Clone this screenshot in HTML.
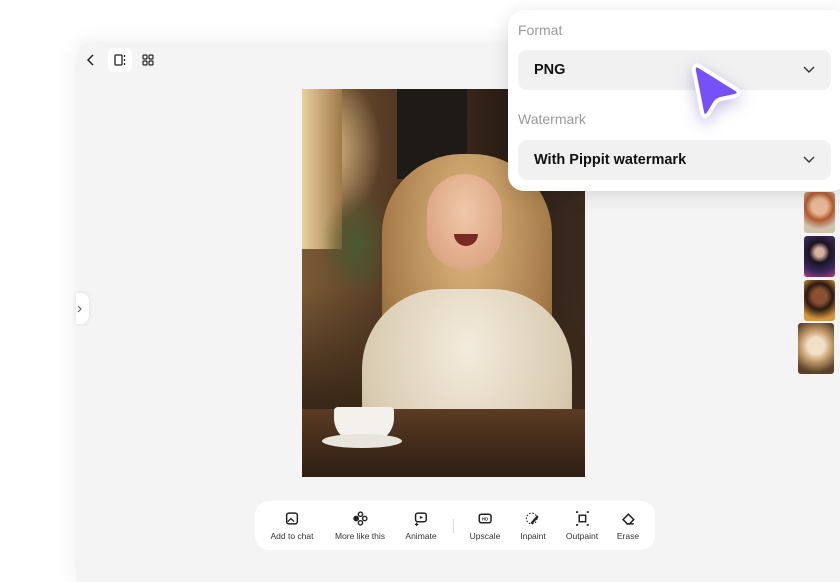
<!DOCTYPE html>
<html><head><meta charset="utf-8"><style>
*{margin:0;padding:0;box-sizing:border-box}
body{width:840px;height:560px;overflow:hidden;background:#fff;font-family:"Liberation Sans",sans-serif;position:relative}
.main{position:absolute;left:76px;top:42px;width:800px;height:540px;background:#f4f4f4;border-radius:18px 0 0 0;box-shadow:0 0 24px rgba(0,0,0,.08)}
.photo{position:absolute;left:302px;top:89px;width:283px;height:388px;overflow:hidden;
background:radial-gradient(ellipse 60px 80px at 20px 60px,#e8c890,transparent),linear-gradient(90deg,#7b5a35 0%,#4a3220 40%,#2a1e16 70%,#3b2a1e 100%)}
.abs{position:absolute}
.tb{position:absolute;left:255px;top:501px;width:400px;height:49px;background:#fff;border-radius:14px}
.tb .it{position:absolute;top:10px;text-align:center;font-size:8.5px;color:#333;transform:translateX(-50%);white-space:nowrap}
.tb svg{display:block;margin:0 auto 5px}
.panel{position:absolute;left:508px;top:10px;width:340px;height:181px;background:#fff;border-radius:16px;box-shadow:0 4px 20px rgba(0,0,0,.12)}
.lbl{position:absolute;left:10px;font-size:14px;color:#999}
.sel{position:absolute;left:10px;width:313px;height:40px;background:#f1f1f1;border-radius:9px;font-size:14.5px;font-weight:bold;color:#111;padding:12px 0 0 16px}
.sel svg{position:absolute;right:16px;top:16px}
.th{position:absolute;border-radius:3px;overflow:hidden}
</style></head><body>
<div class="main"></div>
<svg class="abs" style="left:85px;top:53px" width="12" height="14" viewBox="0 0 12 14"><path d="M8 2L3 7l5 5" stroke="#222" stroke-width="1.5" fill="none"/></svg>
<div class="abs" style="left:108px;top:48px;width:24px;height:24px;background:#fff;border-radius:6px"></div>
<svg class="abs" style="left:113px;top:53px" width="14" height="14" viewBox="0 0 14 14"><rect x="2" y="2" width="7" height="10" rx="1" stroke="#222" stroke-width="1.3" fill="none"/><path d="M11.5 2v2M11.5 6v2M11.5 10v2" stroke="#222" stroke-width="1.3"/></svg>
<svg class="abs" style="left:141px;top:53px" width="14" height="14" viewBox="0 0 14 14"><g stroke="#222" stroke-width="1.2" fill="none"><rect x="2" y="2" width="4" height="4" rx="1"/><rect x="8" y="2" width="4" height="4" rx="1"/><rect x="2" y="8" width="4" height="4" rx="1"/><rect x="8" y="8" width="4" height="4" rx="1"/></g></svg>
<div class="abs" style="left:76px;top:293px;width:13px;height:31px;background:#fff;border-radius:0 8px 8px 0;box-shadow:0 0 4px rgba(0,0,0,.1)"></div>
<svg class="abs" style="left:77px;top:305px" width="6" height="8" viewBox="0 0 6 8"><path d="M1 1l3 3-3 3" stroke="#555" fill="none"/></svg>

<div class="photo">
 <div class="abs" style="left:95px;top:0;width:70px;height:90px;background:#1e1a16"></div>
 <div class="abs" style="left:0;top:0;width:40px;height:160px;background:linear-gradient(90deg,#e9cfa0,#a07848)"></div>
 <div class="abs" style="left:20px;top:100px;width:70px;height:110px;background:radial-gradient(ellipse,#4a5a30,transparent 70%)"></div>
 <div class="abs" style="left:0;top:200px;width:283px;height:188px;background:linear-gradient(180deg,transparent,#3a2818 60%)"></div>
 <div class="abs" style="left:80px;top:65px;width:170px;height:260px;border-radius:80px 80px 50px 50px;background:radial-gradient(ellipse at 50% 30%,#e0b880,#a57a48 70%,#6a4a2a)"></div>
 <div class="abs" style="left:125px;top:85px;width:75px;height:95px;border-radius:40px 40px 38px 38px;background:radial-gradient(ellipse at 50% 40%,#f0c8a8,#d59a78)"></div>
 <div class="abs" style="left:152px;top:145px;width:24px;height:12px;border-radius:0 0 12px 12px;background:#7a2a22"></div>
 <div class="abs" style="left:60px;top:200px;width:210px;height:200px;border-radius:80px 80px 0 0;background:radial-gradient(ellipse at 50% 30%,#f3ebdc,#d8cab0 70%,#b0a088)"></div>
 <div class="abs" style="left:0;top:320px;width:283px;height:68px;background:linear-gradient(180deg,#5a3c24,#2e1e12)"></div>
 <div class="abs" style="left:32px;top:318px;width:60px;height:36px;border-radius:4px 4px 25px 25px;background:#f4f1ec"></div>
 <div class="abs" style="left:20px;top:345px;width:80px;height:14px;border-radius:50%;background:#e8e4de"></div>
</div>

<div class="th" style="left:804px;top:192px;width:31px;height:41px;background:radial-gradient(circle at 50% 35%,#e8b898 25%,#b05a30 45%,#cfc3b0 75%)"></div>
<div class="th" style="left:804px;top:236px;width:31px;height:41px;background:radial-gradient(circle at 50% 40%,#d8b0a0 15%,#1a1420 35%,#3a2a60 70%,#c03a7a)"></div>
<div class="th" style="left:804px;top:280px;width:31px;height:41px;background:radial-gradient(circle at 50% 40%,#8a5030 25%,#2a1a10 45%,#d89840 80%)"></div>
<div class="th" style="left:798px;top:323px;width:36px;height:51px;background:radial-gradient(circle at 50% 45%,#f0e0c8 25%,#c8a070 45%,#5a4028 80%)"></div>

<div class="tb">
 <div class="it" style="left:37px"><svg width="15" height="15" viewBox="0 0 14 14"><rect x="2" y="2" width="10" height="10" rx="2" stroke="#222" stroke-width="1.4" fill="none"/><path d="M3 10l3-3 3 3" stroke="#222" stroke-width="1.2" fill="none"/></svg>Add to chat</div>
 <div class="it" style="left:105px"><svg width="15" height="15" viewBox="0 0 14 14"><g fill="none" stroke="#222" stroke-width="1.3"><circle cx="7" cy="3" r="2"/><circle cx="3" cy="7" r="2" fill="#222"/><circle cx="11" cy="7" r="2"/><circle cx="7" cy="11" r="2"/></g></svg>More like this</div>
 <div class="it" style="left:166px"><svg width="15" height="15" viewBox="0 0 14 14"><rect x="2" y="2" width="10" height="8" rx="2" stroke="#222" stroke-width="1.4" fill="none"/><path d="M6 4.5l3 1.5-3 1.5z" fill="#222"/><path d="M3 11v3M1.5 12.5h3" stroke="#222" stroke-width="1.2"/></svg>Animate</div>
 <div class="abs" style="left:198px;top:18px;width:1px;height:14px;background:#ddd"></div>
 <div class="it" style="left:230px"><svg width="15" height="15" viewBox="0 0 14 14"><rect x="1.5" y="3" width="11" height="8" rx="2" stroke="#222" stroke-width="1.4" fill="none"/><text x="7" y="9" font-size="4" text-anchor="middle" font-weight="bold" fill="#222">HD</text></svg>Upscale</div>
 <div class="it" style="left:278px"><svg width="15" height="15" viewBox="0 0 14 14"><circle cx="6" cy="7" r="5" stroke="#222" stroke-dasharray="1.5 1.5" fill="none"/><path d="M5 11l6-7 1.5 1.5-6 7z" fill="#222"/></svg>Inpaint</div>
 <div class="it" style="left:327px"><svg width="15" height="15" viewBox="0 0 14 14"><rect x="4" y="4" width="6" height="6" stroke="#222" stroke-width="1.4" fill="none"/><path d="M1 1h2M11 1h2M1 13h2M11 13h2" stroke="#222" stroke-width="1.6"/></svg>Outpaint</div>
 <div class="it" style="left:373px"><svg width="15" height="15" viewBox="0 0 14 14"><path d="M2 8l5-5 5 5-4 4H6z" stroke="#222" stroke-width="1.4" fill="none"/><path d="M5 12h7" stroke="#222" stroke-width="1.4"/></svg>Erase</div>
</div>

<div class="panel">
 <div class="lbl" style="top:12px">Format</div>
 <div class="sel" style="top:40px">PNG<svg width="12" height="8" viewBox="0 0 12 8"><path d="M1 1l5 5 5-5" stroke="#333" stroke-width="1.4" fill="none"/></svg></div>
 <div class="lbl" style="top:101px">Watermark</div>
 <div class="sel" style="top:130px">With Pippit watermark<svg width="12" height="8" viewBox="0 0 12 8"><path d="M1 1l5 5 5-5" stroke="#333" stroke-width="1.4" fill="none"/></svg></div>
</div>
<svg class="abs" style="left:682px;top:56px;filter:drop-shadow(0 5px 8px rgba(60,40,160,.3))" width="66" height="72" viewBox="0 0 66 72"><path d="M17 10 Q11 8 12 15 L20 56 Q22 64 27 57 L33 47 Q35 44 39 43 L53 40 Q60 37 54 33 Z" fill="#7650f8" stroke="#fff" stroke-width="4" stroke-linejoin="round"/></svg>
</body></html>
